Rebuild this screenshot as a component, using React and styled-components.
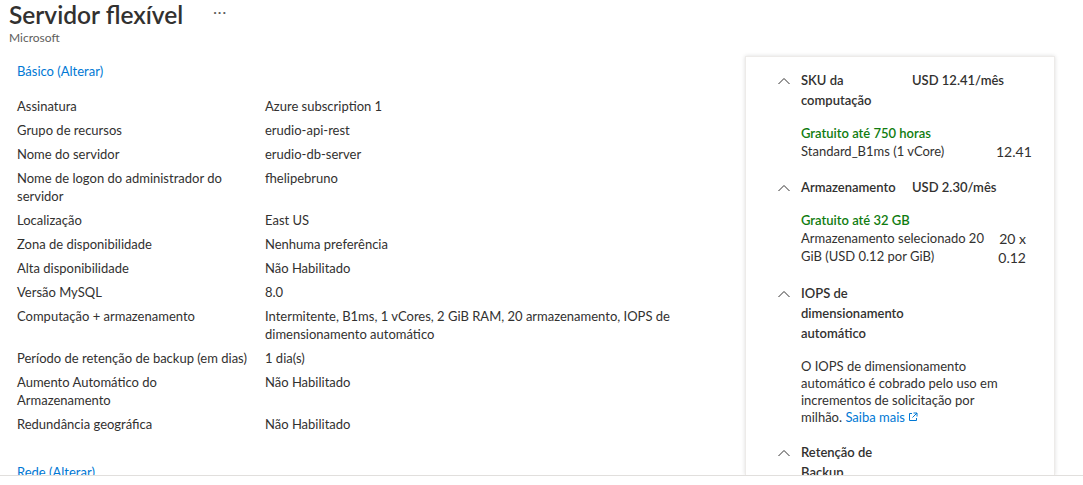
import React from 'react'
import styled, { createGlobalStyle } from 'styled-components'

const GlobalStyle = createGlobalStyle`
  html, body {
    margin: 0;
    padding: 0;
    background: #fff;
  }
  body {
    font-family: 'Segoe UI', Lato, 'Noto Sans', sans-serif;
    font-size: 13px;
    color: #323130;
  }
`

const Page = styled.div`
  height: 485px;
  display: flex;
  flex-direction: column;
  overflow: hidden;
`

const Header = styled.header`
  padding: 0 9px;
  height: 46px;
  flex-shrink: 0;
`

const TitleRow = styled.div`
  display: flex;
  align-items: center;
  gap: 30px;
`

const Title = styled.h1`
  margin: 0;
  font-size: 24.5px;
  line-height: 30px;
  font-weight: 600;
  color: #323130;
`

const More = styled.span`
  font-size: 14px;
  letter-spacing: 1px;
  color: #605e5c;
  line-height: 14px;
  padding-bottom: 6px;
`

const Subtitle = styled.div`
  font-size: 12px;
  line-height: 16px;
  color: #605e5c;
`

const Body = styled.div`
  flex: 1;
  display: flex;
  overflow: hidden;
  min-height: 0;
`

const Main = styled.main`
  flex: 1;
  padding: 15px 0 0 17px;
`

const SectionLink = styled.a`
  display: block;
  color: #0078d4;
  font-size: 13px;
  line-height: 20px;
  text-decoration: none;
  margin-bottom: ${p => p.$gap || 16}px;
  margin-top: ${p => p.$top || 0}px;
`

const Rows = styled.dl`
  margin: 0;
  display: grid;
  grid-template-columns: 248px 408px;
  row-gap: 6px;
`

const Label = styled.dt`
  margin: 0;
  line-height: 18px;
  padding-right: 18px;
`

const Value = styled.dd`
  margin: 0;
  line-height: 18px;
`

const Panel = styled.aside`
  width: 310px;
  margin: 10px 28px 0 0;
  border: 1px solid #edebe9;
  border-bottom: none;
  box-shadow: 0 0 4px rgba(0, 0, 0, 0.14);
  padding: 13px 28px 0 32px;
  box-sizing: border-box;
  flex-shrink: 0;
`

const Section = styled.section`
  margin-bottom: 16px;
`

const SectionHead = styled.div`
  display: grid;
  grid-template-columns: 17px 105px auto;
  column-gap: 6px;
  align-items: start;
  font-weight: 600;
  line-height: 20px;
  margin-bottom: 14px;
`

const Chevron = styled.svg`
  width: 12px;
  height: 8px;
  margin-top: 7px;
`

const Price = styled.span`
  white-space: nowrap;
`

const Detail = styled.div`
  padding-left: 23px;
`

const Free = styled.div`
  color: #107c10;
  font-weight: 600;
  line-height: 18px;
`

const CostRow = styled.div`
  display: flex;
  justify-content: space-between;
  align-items: flex-start;
`

const CostText = styled.div`
  width: 190px;
  line-height: 17.5px;
  padding-top: 1px;
`

const Amount = styled.div`
  width: 30px;
  text-align: right;
  font-size: 14px;
  line-height: 19px;
`

const Note = styled.p`
  margin: 0;
  width: 210px;
  line-height: 17px;
  padding-top: 1px;
`

const Link = styled.a`
  color: #0078d4;
  text-decoration: none;
  white-space: nowrap;
`

const Footer = styled.div`
  height: 9px;
  flex-shrink: 0;
  border-top: 1px solid #e1dfdd;
`

const rows = [
  ['Assinatura', 'Azure subscription 1'],
  ['Grupo de recursos', 'erudio-api-rest'],
  ['Nome do servidor', 'erudio-db-server'],
  ['Nome de logon do administrador do servidor', 'fhelipebruno'],
  ['Localização', 'East US'],
  ['Zona de disponibilidade', 'Nenhuma preferência'],
  ['Alta disponibilidade', 'Não Habilitado'],
  ['Versão MySQL', '8.0'],
  ['Computação + armazenamento', 'Intermitente, B1ms, 1 vCores, 2 GiB RAM, 20 armazenamento, IOPS de dimensionamento automático'],
  ['Período de retenção de backup (em dias)', '1 dia(s)'],
  ['Aumento Automático do Armazenamento', 'Não Habilitado'],
  ['Redundância geográfica', 'Não Habilitado']
]

const Up = () => (
  <Chevron viewBox="0 0 12 8">
    <polyline points="0.5,7 6,1.5 11.5,7" fill="none" stroke="#323130" strokeWidth="1" />
  </Chevron>
)

const ExternalIcon = () => (
  <svg width="10" height="10" viewBox="0 0 10 10" style={{ marginLeft: 3, verticalAlign: '0px' }}>
    <path d="M4 1.5H1.5v7h7V6" fill="none" stroke="#0078d4" strokeWidth="1" />
    <path d="M5.5 1H9v3.5M9 1L4.5 5.5" fill="none" stroke="#0078d4" strokeWidth="1" />
  </svg>
)

const Head = ({ title, price }) => (
  <SectionHead>
    <Up />
    <span>{title}</span>
    <Price>{price}</Price>
  </SectionHead>
)

export default function App() {
  return (
    <Page>
      <GlobalStyle />
      <Header>
        <TitleRow>
          <Title>Servidor flexível</Title>
          <More>···</More>
        </TitleRow>
        <Subtitle>Microsoft</Subtitle>
      </Header>
      <Body>
        <Main>
          <SectionLink href="#">Básico (Alterar)</SectionLink>
          <Rows>
            {rows.map(([k, v]) => (
              <React.Fragment key={k}>
                <Label>{k}</Label>
                <Value>{v}</Value>
              </React.Fragment>
            ))}
          </Rows>
          <SectionLink href="#" $top={29}>Rede (Alterar)</SectionLink>
        </Main>
        <Panel>
          <Section>
            <Head title="SKU da computação" price="USD 12.41/mês" />
            <Detail>
              <Free>Gratuito até 750 horas</Free>
              <CostRow>
                <CostText>Standard_B1ms (1 vCore)</CostText>
                <Amount>12.41</Amount>
              </CostRow>
            </Detail>
          </Section>
          <Section>
            <Head title="Armazenamento" price="USD 2.30/mês" />
            <Detail>
              <Free>Gratuito até 32 GB</Free>
              <CostRow>
                <CostText>Armazenamento selecionado 20 GiB (USD 0.12 por GiB)</CostText>
                <Amount>20 x 0.12</Amount>
              </CostRow>
            </Detail>
          </Section>
          <Section>
            <Head title="IOPS de dimensionamento automático" />
            <Detail>
              <Note>
                O IOPS de dimensionamento automático é cobrado pelo uso em incrementos de solicitação por milhão.{' '}
                <Link href="#">Saiba mais<ExternalIcon /></Link>
              </Note>
            </Detail>
          </Section>
          <Section>
            <Head title="Retenção de Backup" />
          </Section>
        </Panel>
      </Body>
      <Footer />
    </Page>
  )
}
